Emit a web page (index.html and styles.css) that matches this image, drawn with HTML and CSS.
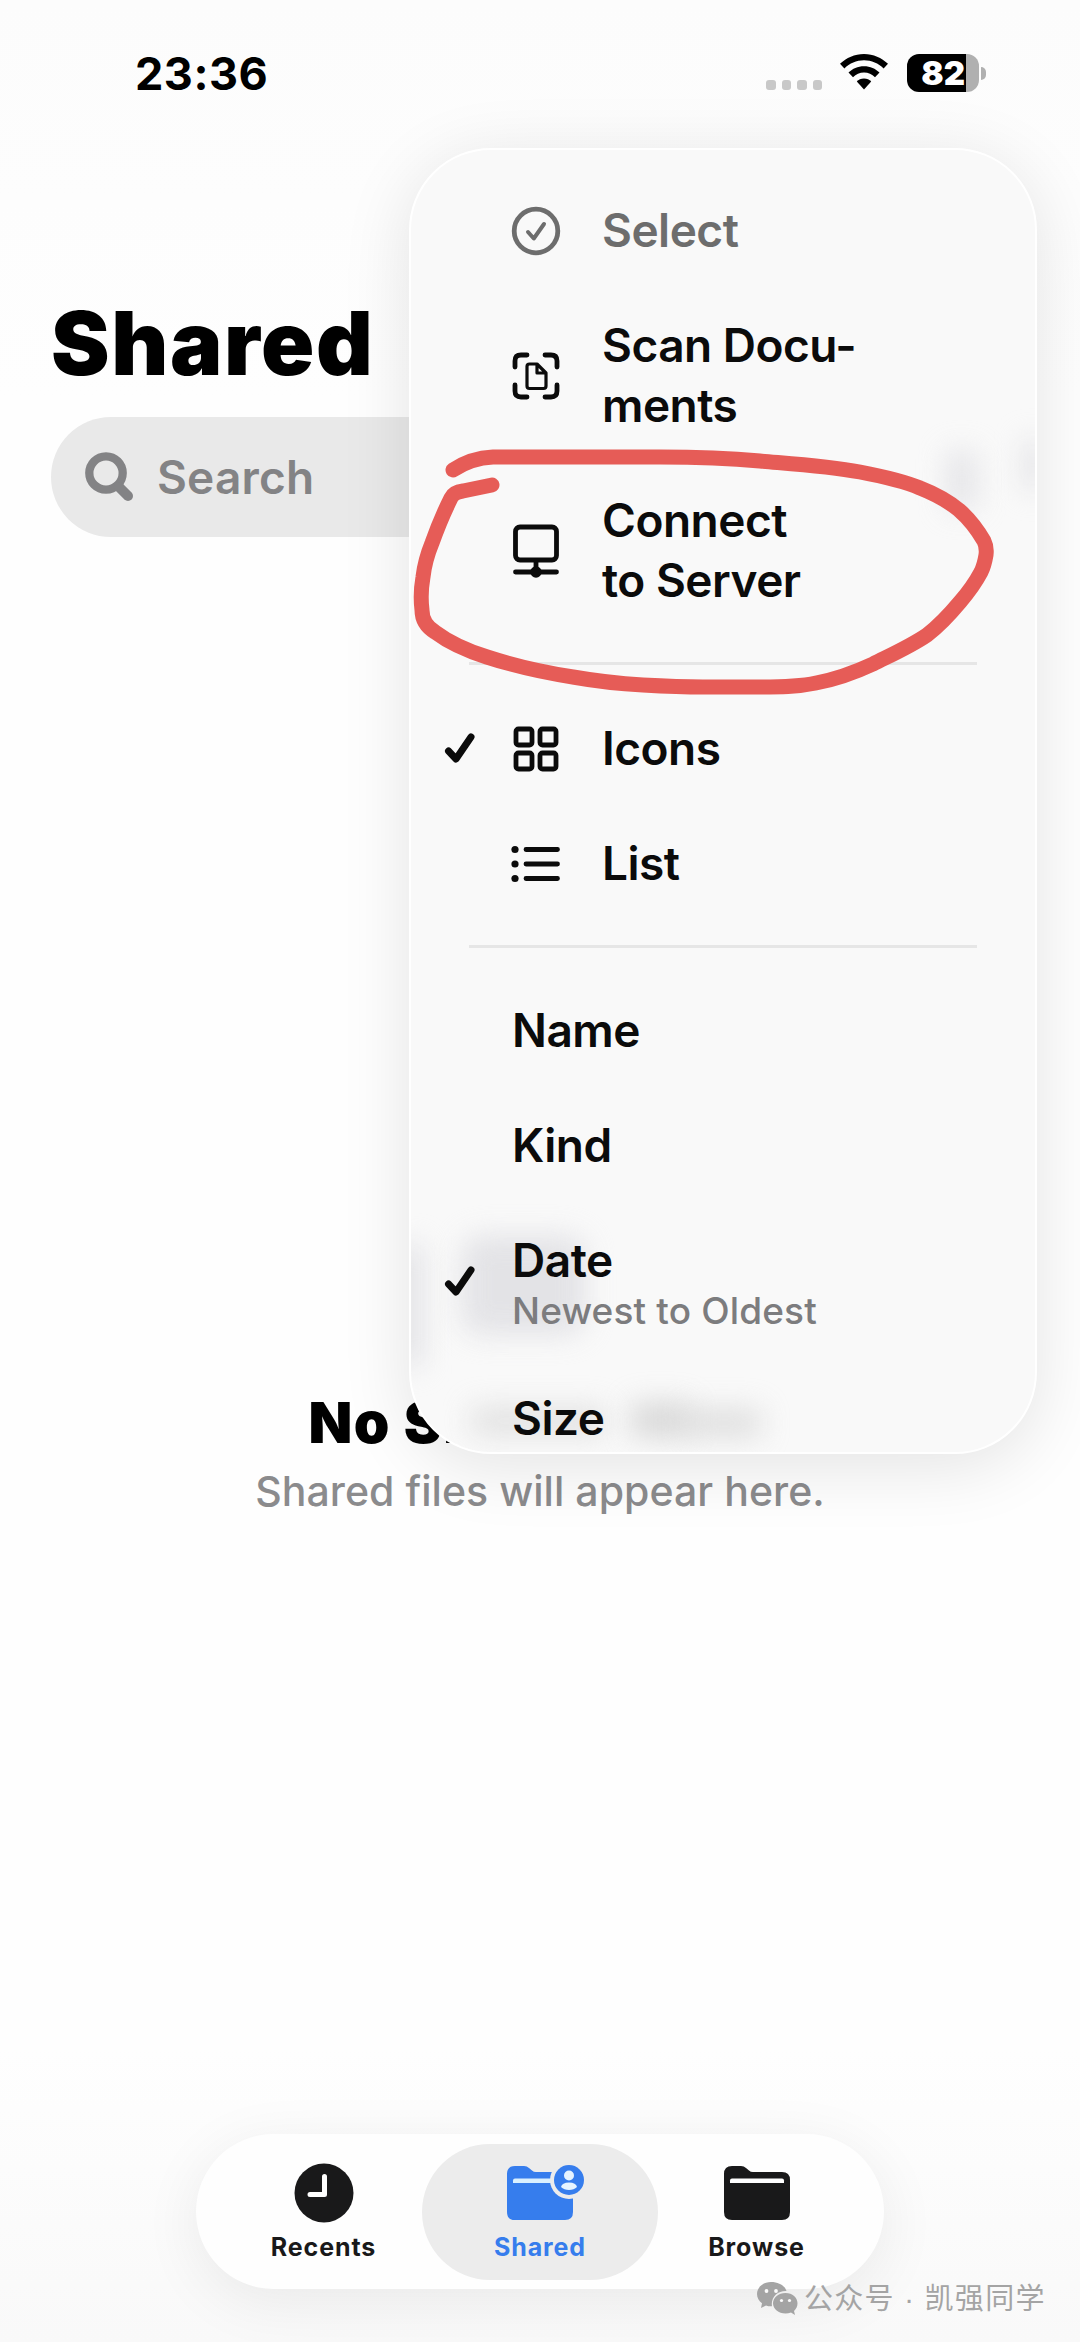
FILE: index.html
```html
<!DOCTYPE html>
<html lang="en">
<head>
<meta charset="utf-8">
<title>Files</title>
<link rel="stylesheet" href="styles.css">
</head>
<body>
<div class="screen">
  <header class="status">
    <span class="time">23:36</span>
    <div class="indicators">
      <div class="dots"><i></i><i></i><i></i><i></i></div>
      <svg class="wifi" width="48" height="36" viewBox="0 0 48 36"><path d="M24 0C14.500 0 6.500 3.800 0 9.800L4.400 14.400C9.600 9.300 16.400 6.300 24 6.300S38.400 9.300 43.600 14.400L48 9.800C41.500 3.800 33.500 0 24 0Z"/><path d="M24 12.300C17.700 12.300 12.600 14.600 8.500 18.600L13 23.200C16 20.300 19.700 18.600 24 18.600S32 20.300 35 23.200L39.500 18.600C35.400 14.600 30.300 12.300 24 12.300Z"/><path d="M24 24.400C21 24.400 18.600 25.600 16.800 27.400L24 35.600L31.200 27.400C29.400 25.600 27 24.400 24 24.400Z"/></svg>
      <div class="battery"><span class="level">82</span></div>
      <i class="nub"></i>
    </div>
  </header>

  <h1 class="title">Shared</h1>
  <div class="search">
    <svg width="50" height="50" viewBox="0 0 50 50" fill="none" stroke="#838385" stroke-linecap="round"><circle cx="22" cy="21" r="16.700" stroke-width="8.300"/><path d="M35 35L44 44" stroke-width="10"/></svg>
    <span>Search</span>
  </div>

  <main class="empty">
    <h2>No Shared Files</h2>
    <p>Shared files will appear here.</p>
  </main>

  <nav class="tabs">
    <a class="tab first">
      <svg width="60" height="60" viewBox="0 0 60 60"><circle cx="30" cy="30" r="29.500" fill="#19191a"/><path d="M30.500 13.500V31.500H16" fill="none" stroke="#fff" stroke-width="5" stroke-linecap="round" stroke-linejoin="round"/></svg>
      <span>Recents</span>
    </a>
    <a class="tab active">
      <svg width="80" height="60" viewBox="0 0 80 60"><path d="M1 11Q1 3 9 3H18Q21 3 23 5L26 7.500Q27.500 9 30 9H59Q67 9 67 17V49Q67 57 59 57H9Q1 57 1 49Z" fill="#367ded"/><path d="M7 20V17.500Q7 15.500 9 15.500H50V20Z" fill="#d9f0ff"/><circle cx="63" cy="17" r="19" fill="#ececec"/><circle cx="63" cy="17" r="15" fill="#367ded"/><circle cx="63" cy="12.500" r="5" fill="#e6f4ff"/><path d="M55 24Q56 19.500 63 19.500T71 24Q68 27 63 27T55 24Z" fill="#e6f4ff"/></svg>
      <span>Shared</span>
    </a>
    <a class="tab last">
      <svg width="68" height="60" viewBox="0 0 68 60"><path d="M1 11Q1 3 9 3H18Q21 3 23 5L26 7.500Q27.500 9 30 9H59Q67 9 67 17V49Q67 57 59 57H9Q1 57 1 49Z" fill="#19191a"/><path d="M7 20V17.500Q7 15.500 9 15.500H59Q61 15.500 61 17.500V20Z" fill="#fff"/></svg>
      <span>Browse</span>
    </a>
  </nav>

  <section class="menu">
    <i class="smudge s1"></i><i class="smudge s2"></i><i class="smudge s3"></i><i class="smudge s4"></i><i class="smudge s5"></i><i class="smudge s6"></i><i class="smudge s7"></i>
    <div class="row muted">
      <span class="check"></span>
      <svg class="icon" width="52" height="52" viewBox="0 0 52 52"><circle cx="26" cy="26" r="21.800"/><path d="M18 27L23.800 33.500L34 19" class="mid"/></svg>
      <span>Select</span>
    </div>
    <div class="row">
      <span class="check"></span>
      <svg class="icon" width="52" height="52" viewBox="0 0 52 52"><path d="M5 17V11Q5 5 11 5H17M35 5H41Q47 5 47 11V17M47 35V41Q47 47 41 47H35M17 47H11Q5 47 5 41V35"/><path class="thin" d="M17 16.500Q17 14 19.500 14H27L36 23V36Q36 38.500 33.500 38.500H19.500Q17 38.500 17 36ZM27 14.500V23H35.500"/></svg>
      <span>Scan Docu-<br>ments</span>
    </div>
    <div class="row">
      <span class="check"></span>
      <svg class="icon" width="52" height="56" viewBox="0 0 52 56"><rect x="5.500" y="4" width="41" height="33" rx="4.500"/><path d="M26 38V48M5.500 49H46.500"/><circle cx="26" cy="49" r="5.700" class="solid"/></svg>
      <span>Connect<br>to Server</span>
    </div>
    <hr>
    <div class="row">
      <svg class="check" width="34" height="34" viewBox="0 0 34 34"><path d="M4.500 19L12 27L27 5"/></svg>
      <svg class="icon" width="52" height="52" viewBox="0 0 52 52"><rect x="6" y="6" width="16" height="16" rx="2.500"/><rect x="30" y="6" width="16" height="16" rx="2.500"/><rect x="6" y="30" width="16" height="16" rx="2.500"/><rect x="30" y="30" width="16" height="16" rx="2.500"/></svg>
      <span>Icons</span>
    </div>
    <div class="row">
      <span class="check"></span>
      <svg class="icon" width="52" height="52" viewBox="0 0 52 52"><path d="M16 11.500H47.500M16 26H47.500M16 40.500H47.500"/><circle cx="5" cy="11.500" r="3.600" class="solid"/><circle cx="5" cy="26" r="3.600" class="solid"/><circle cx="5" cy="40.500" r="3.600" class="solid"/></svg>
      <span>List</span>
    </div>
    <hr>
    <div class="row plain"><span class="check"></span><span>Name</span></div>
    <div class="row plain"><span class="check"></span><span>Kind</span></div>
    <div class="row plain">
      <svg class="check" width="34" height="34" viewBox="0 0 34 34"><path d="M4.500 19L12 27L27 5"/></svg>
      <span>Date<small>Newest to Oldest</small></span>
    </div>
    <div class="row plain"><span class="check"></span><span>Size</span></div>
  </section>

  <svg class="marker" width="600" height="260" viewBox="0 0 600 260"><path d="M42 30Q60 18 82 17H249C283 17 316 18 349 21C384 24 417 26 449 32C470 36 490 40 509 48Q532 57 548 70Q562 82 573 101Q576 107 575 115C574 121 573 126 570 132Q562 147 549 162C539 174 529 185 516 195C500 206 482 214 462 224Q432 238 405 243C386 247 368 247 349 247H292C270 247 250 246 232 245Q196 243 162 237Q116 230 76 217Q44 207 24 192Q11 184 11 170Q9 154 12 137Q14 120 21 103Q30 78 40 58Q43 52 52 51L81 45"/></svg>

  <div class="watermark">
    <svg width="42" height="36" viewBox="0 0 42 36"><path d="M15 1C7 1 1 6.500 1 13C1 17 3 20 6 22.300L5 27L10 24.400Q13 25.500 16 25.200C14.500 16 22 9.500 30.500 10C29 5 23 1 15 1Z"/><path d="M29.500 12C22.500 12 17 16.600 17 22.300S22.500 32.500 29.500 32.500Q32.500 32.500 35 31.500L39 34L38 30C40.300 28 41.500 25.500 41.500 22.300C41.500 16.600 36.500 12 29.500 12Z"/><g fill="#fafafa"><circle cx="10.500" cy="10" r="1.900"/><circle cx="20" cy="10" r="1.900"/><circle cx="25.500" cy="19.500" r="1.600"/><circle cx="33.500" cy="19.500" r="1.600"/></g></svg>
    <span>公众号 · 凯强同学</span>
  </div>
</div>
</body>
</html>
```
FILE: styles.css
```css
* { box-sizing: border-box; }
body { margin: 0; background: #fdfdfd; font-family: Inter, "Liberation Sans", sans-serif; color: #000; }
.screen { position: relative; width: 1080px; height: 2342px; overflow: hidden; display: flex; flex-direction: column; background: linear-gradient(#fcfcfc, #fefefe 400px, #fefefe 2050px, #f9f9f9 2342px); }

.status { display: flex; justify-content: space-between; height: 148px; padding: 46px 94px 0 135px; }
.time { font-size: 45px; font-weight: 750; line-height: 55px; letter-spacing: .5px; }
.indicators { display: flex; align-items: flex-start; padding-top: 8px; }
.dots { display: flex; gap: 6px; padding-top: 26px; margin-right: 18px; }
.dots i { width: 9.500px; height: 9.500px; border-radius: 3px; background: #c8c8c8; }
.wifi { margin-right: 19px; }
.battery { width: 72px; height: 38px; border-radius: 12px; background: linear-gradient(90deg, #000 59px, #b0b0b0 59px); }
.level { display: block; width: 59px; padding-right: 1px; color: #fff; font-size: 33px; font-weight: 900; line-height: 38px; text-align: right; }
.nub { width: 5px; height: 13px; margin: 13px 0 0 2px; border-radius: 0 6px 6px 0; background: #b0b0b0; }

.title { margin: 142px 0 0 51px; font-size: 88px; font-weight: 900; line-height: 106px; letter-spacing: 1.6px; }
.search { display: flex; align-items: center; gap: 23px; flex: none; width: 978px; height: 120px; margin: 21px 0 0 51px; padding-left: 33px; border-radius: 60px; background: #e9e9e9; color: #838385; font-size: 46px; font-weight: 600; letter-spacing: .2px; }
.empty { margin-top: 851px; text-align: center; }
.empty h2 { margin: 0; font-size: 57px; font-weight: 900; line-height: 70px; letter-spacing: 1.500px; white-space: nowrap; }
.empty p { margin: 8px 0 0; font-size: 41px; font-weight: 550; line-height: 50px; letter-spacing: .05px; color: #8b8b8d; }

.tabs { display: flex; align-items: center; width: 688px; height: 155px; margin: auto auto 53px 196px; padding: 0 10px; border-radius: 78px; background: #fefefe; box-shadow: 0 12px 60px rgba(0,0,0,.07); }
.tab { flex: 1 1 0; display: flex; flex-direction: column; align-items: center; gap: 8px; height: 136px; padding-top: 19px; border-radius: 68px; color: #19191a; font-size: 25px; font-weight: 700; line-height: 32px; letter-spacing: .9px; }
.tab.first { padding-left: 19px; }
.tab.last { padding-right: 19px; }
.tab.active { flex: 0 0 236px; background: #ececec; color: #367ded; }
.tab.active svg { margin-left: 12px; }

.menu { position: absolute; left: 409px; top: 148px; width: 628px; height: 1306px; padding-top: 22px; overflow: hidden; border: 2px solid #fff; border-radius: 82px; background: #f9f9f9; box-shadow: 0 12px 70px rgba(0,0,0,.11); font-size: 46px; font-weight: 600; line-height: 60px; letter-spacing: -.5px; color: #0b0b0b; }
.row { position: relative; display: flex; align-items: center; padding: 27.500px 0; }
.row .check { flex: none; width: 34px; margin: 0 32px 0 33px; }
.row svg.check { position: relative; top: 1px; }
.icon { flex: none; position: relative; top: 1px; margin-right: 40px; }
.row.plain { top: -1px; }
.row.plain .check { margin-right: 34px; }
.row svg { fill: none; stroke: currentColor; stroke-width: 4.800px; stroke-linecap: round; stroke-linejoin: round; }
.row svg.check { stroke-width: 7px; }
.row .thin { stroke-width: 3.200px; }
.row .mid { stroke-width: 4px; }
.row .solid { fill: currentColor; stroke: none; }
.muted { color: #6d6d6d; }
.row small { display: block; margin-top: -2px; font-size: 37px; font-weight: 550; line-height: 45px; color: #7c7c7e; letter-spacing: .15px; }
.menu hr { position: relative; height: 3px; margin: 25px 58px; border: 0; background: #e6e6e6; }

.smudge { position: absolute; filter: blur(14px); background: #dedee2; }
.s1 { left: 50px; top: 1085px; width: 125px; height: 100px; border-radius: 20px; opacity: .8; }
.s2 { left: -12px; top: 1095px; width: 22px; height: 120px; }
.s3 { left: 220px; top: 1252px; width: 60px; height: 36px; background: #c4c4c4; opacity: .6; }
.s4 { left: 60px; top: 1256px; width: 135px; height: 30px; background: #d4d4d4; opacity: .6; }
.s5 { left: 535px; top: 300px; width: 32px; height: 60px; opacity: .7; }
.s6 { left: 614px; top: 290px; width: 16px; height: 50px; }
.s7 { left: 275px; top: 1258px; width: 75px; height: 30px; background: #cfcfcf; opacity: .6; }

.marker { position: absolute; left: 411px; top: 440px; overflow: visible; fill: none; stroke: #e65c57; stroke-width: 15px; stroke-linecap: round; stroke-linejoin: round; }
.watermark { position: absolute; left: 756px; top: 2279px; display: flex; align-items: center; gap: 6px; font: 29px/40px "Liberation Sans", "Noto Sans CJK SC", sans-serif; letter-spacing: 1.300px; color: #a4a4a4; white-space: nowrap; }
.watermark svg { fill: #a4a4a4; }
```
